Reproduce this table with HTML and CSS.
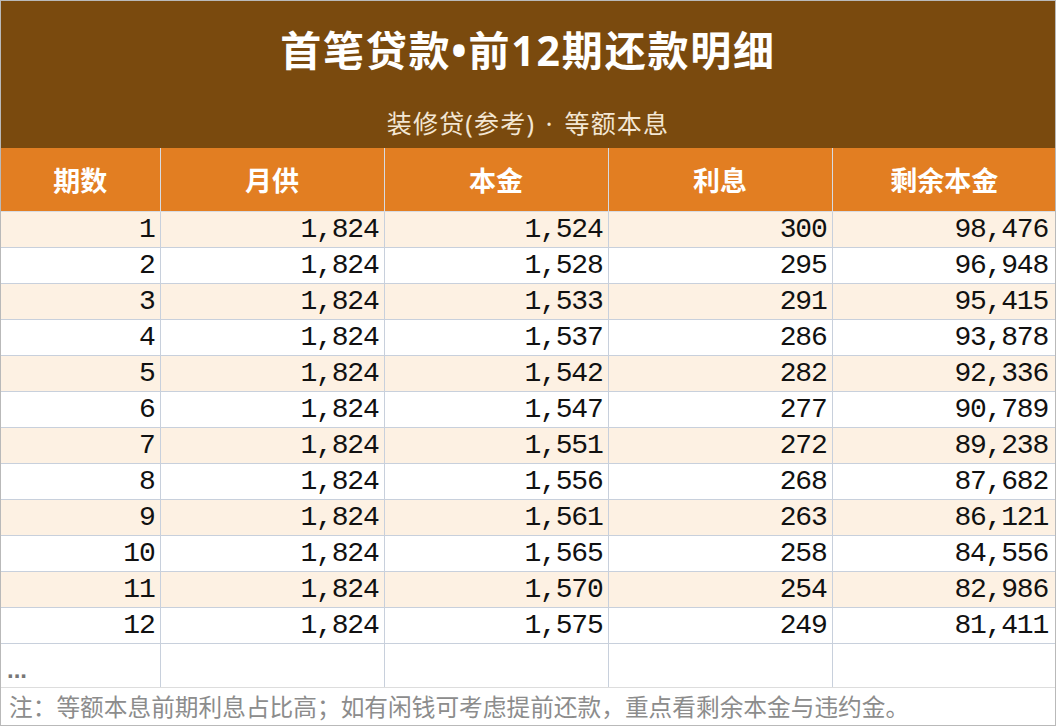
FILE: index.html
```html
<!DOCTYPE html>
<html lang="zh">
<head>
<meta charset="utf-8">
<link rel="stylesheet" href="styles.css">
</head>
<body>
<div class="sheet">
  <header class="banner">
    <h1 class="title">首笔贷款•前12期还款明细</h1>
    <p class="subtitle">装修贷(参考) · 等额本息</p>
  </header>
  <table class="grid">
    <colgroup>
      <col class="c-first"><col class="c-num"><col class="c-num"><col class="c-num"><col class="c-num">
    </colgroup>
    <thead>
      <tr class="head"><th>期数</th><th>月供</th><th>本金</th><th>利息</th><th>剩余本金</th></tr>
    </thead>
    <tbody>
      <tr class="odd"><td>1</td><td>1,824</td><td>1,524</td><td>300</td><td>98,476</td></tr>
      <tr><td>2</td><td>1,824</td><td>1,528</td><td>295</td><td>96,948</td></tr>
      <tr class="odd"><td>3</td><td>1,824</td><td>1,533</td><td>291</td><td>95,415</td></tr>
      <tr><td>4</td><td>1,824</td><td>1,537</td><td>286</td><td>93,878</td></tr>
      <tr class="odd"><td>5</td><td>1,824</td><td>1,542</td><td>282</td><td>92,336</td></tr>
      <tr><td>6</td><td>1,824</td><td>1,547</td><td>277</td><td>90,789</td></tr>
      <tr class="odd"><td>7</td><td>1,824</td><td>1,551</td><td>272</td><td>89,238</td></tr>
      <tr><td>8</td><td>1,824</td><td>1,556</td><td>268</td><td>87,682</td></tr>
      <tr class="odd"><td>9</td><td>1,824</td><td>1,561</td><td>263</td><td>86,121</td></tr>
      <tr><td>10</td><td>1,824</td><td>1,565</td><td>258</td><td>84,556</td></tr>
      <tr class="odd"><td>11</td><td>1,824</td><td>1,570</td><td>254</td><td>82,986</td></tr>
      <tr><td>12</td><td>1,824</td><td>1,575</td><td>249</td><td>81,411</td></tr>
      <tr class="more"><td>...</td><td></td><td></td><td></td><td></td></tr>
    </tbody>
  </table>
  <p class="note">注：等额本息前期利息占比高；如有闲钱可考虑提前还款，重点看剩余本金与违约金。</p>
</div>
</body>
</html>
```

FILE: styles.css
```css
html, body {
  margin: 0;
  padding: 0;
  background: #ffffff;
}

.sheet {
  width: 1056px;
  height: 726px;
  box-sizing: border-box;
  border: 1px solid #b9b9b9;
  overflow: hidden;
  font-family: "Noto Sans CJK SC", "Noto Sans", sans-serif;
  background: #ffffff;
}

.banner {
  height: 147px;
  background: #7a4a0e;
  display: flex;
  flex-direction: column;
  align-items: center;
  color: #ffffff;
}

.title {
  margin: 0;
  padding-top: 20px;
  height: 58px;
  font-family: "Noto Sans", "Noto Sans CJK SC", sans-serif;
  font-size: 41px;
  line-height: 58px;
  font-weight: 700;
  letter-spacing: 1.8px;
}

.subtitle {
  margin: 0;
  margin-top: 27px;
  font-family: "Noto Sans", "Noto Sans CJK SC", sans-serif;
  font-size: 25px;
  line-height: 34px;
  letter-spacing: 1.2px;
  word-spacing: 3px;
  color: #f3e6d3;
}

.grid {
  width: 1054px;
  table-layout: fixed;
  border-collapse: collapse;
}

.c-first { width: 159px; }
.c-num { width: 224px; }

.grid th,
.grid td {
  border: 1px solid #c8d0dc;
  padding: 0 5px 0 0;
  overflow: hidden;
  white-space: nowrap;
}

.grid th:first-child, .grid td:first-child { border-left: 0; }
.grid th:last-child, .grid td:last-child { border-right: 0; }

.head th {
  height: 63px;
  background: #e27e22;
  color: #ffffff;
  font-size: 27px;
  font-weight: 700;
  text-align: center;
  padding: 0;
  border-color: #d7dbe2;
  border-top: 0;
}

.grid tbody td {
  height: 35px;
  text-align: right;
  font-family: "Liberation Mono", "DejaVu Sans Mono", monospace;
  font-size: 28px;
  letter-spacing: -1.2px;
  line-height: 35px;
  color: #111111;
  padding-right: 5px;
}

.grid tbody td:last-child { padding-right: 8px; }

.grid tbody tr.odd td { background: #fdf1e3; }

.grid tbody tr.more td {
  height: 35px;
  text-align: left;
  font-family: "Liberation Sans", sans-serif;
  font-size: 24px;
  font-weight: 700;
  color: #777777;
  letter-spacing: 0;
  padding: 8px 0 0 6px;
  vertical-align: middle;
  line-height: 20px;
  border-bottom: 1px solid #dddddd;
}

.note {
  margin: 0;
  padding: 0 0 0 8px;
  height: 38px;
  font-size: 23.7px;
  line-height: 36px;
  color: #8c8c8c;
  white-space: nowrap;
}
```
